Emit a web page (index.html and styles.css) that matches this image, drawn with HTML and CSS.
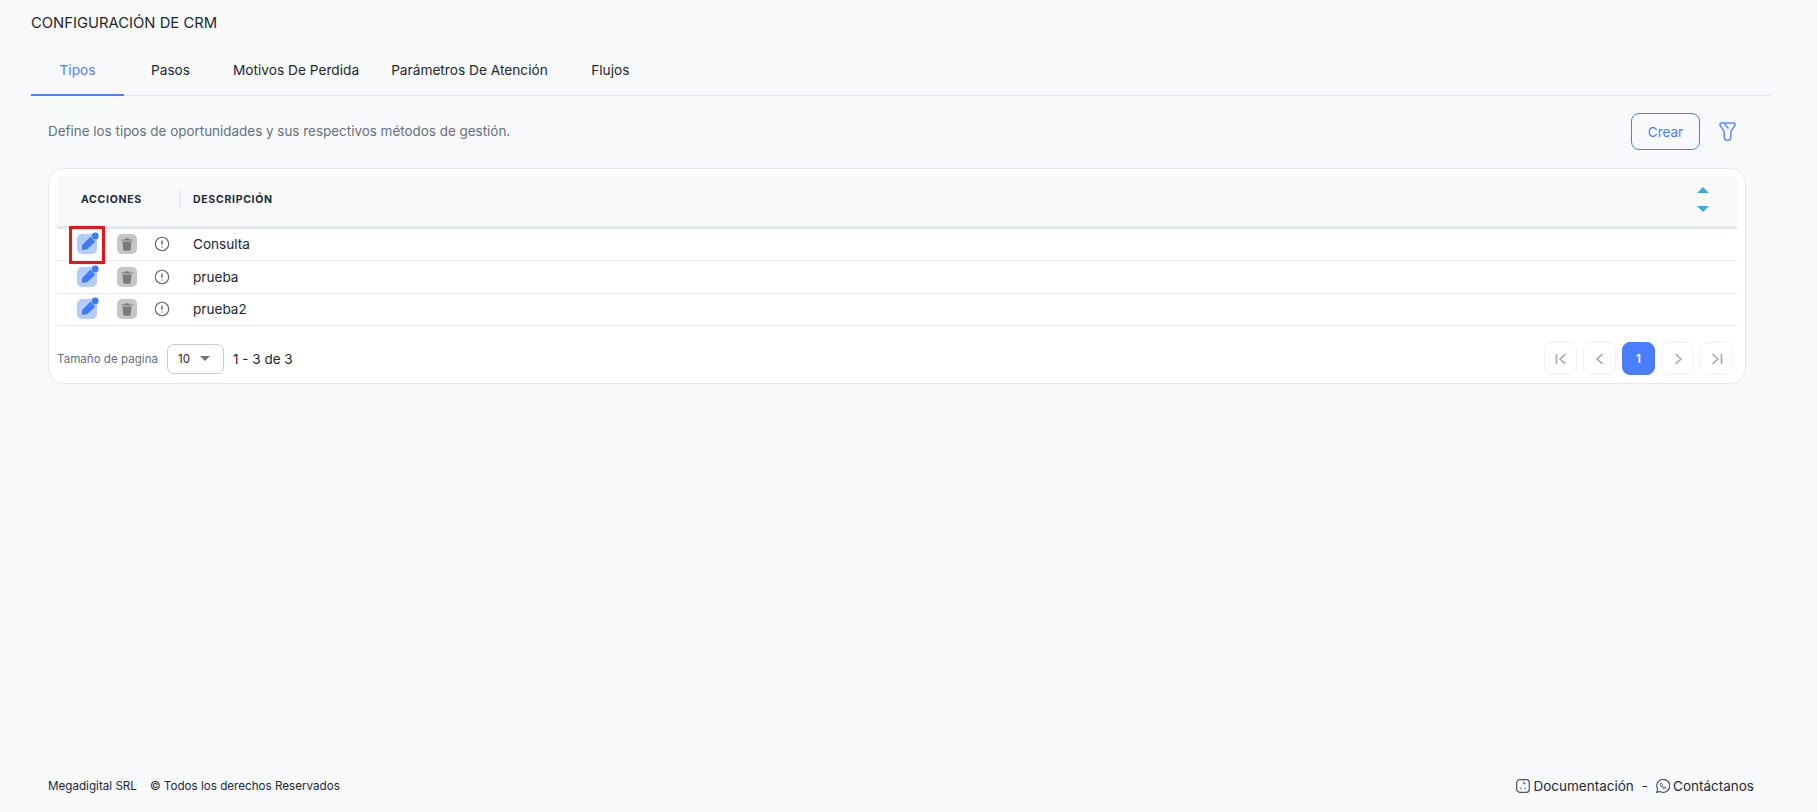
FILE: index.html
```html
<!DOCTYPE html>
<html lang="es">
<head>
    <meta charset="UTF-8">
    <title>Configuración de CRM</title>
    <link rel="stylesheet" href="styles.css">
</head>
<body>

<div class="page">
    <main class="content">
        <h1 class="title">CONFIGURACIÓN DE CRM</h1>

        <nav class="tabs">
            <a class="tab active">Tipos</a>
            <a class="tab">Pasos</a>
            <a class="tab">Motivos De Perdida</a>
            <a class="tab">Parámetros De Atención</a>
            <a class="tab">Flujos</a>
        </nav>

        <div class="panel">
            <div class="toolbar">
                <p class="intro">Define los tipos de oportunidades y sus respectivos métodos de gestión.</p>
                <button class="btn-create">Crear</button>
                <svg class="filter-icon" width="17" height="19" viewBox="0 0 17 19" fill="none" stroke="#5b8cff" stroke-width="1.500" stroke-linejoin="round">
                    <path d="M2.500 1h12c1.500 0 2 1.500 1.200 2.600L12.500 8.500c-.5.6-.7 1.200-.7 2V16c0 1.500-1.300 2.200-3.300 2.200S5.300 17.500 5.300 16v-5.500c0-.8-.2-1.400-.7-2L1.300 3.600C.5 2.500 1 1 2.500 1z"/>
                    <path d="M5 1.200l4.500 5.300"/>
                </svg>
            </div>

            <!-- Tabla de tipos -->
            <div class="card">
                <div class="table-head">
                    <div class="col-actions head-actions">ACCIONES</div>
                    <div class="col-desc head-desc">DESCRIPCIÓN</div>
                    <div class="sort">
                        <span class="sort-up"></span>
                        <span class="sort-down"></span>
                    </div>
                </div>

                <div class="row">
                    <div class="col-actions">
                        <span class="icon-edit wrap-marked">
                            <svg width="20" height="20" viewBox="0 0 20 20"><path fill="#3f7bf6" d="M1.800 18.700l.3-3.800c.1-.6.3-1 .7-1.400L10.300 5.800l5 5-7.700 7c-.4.4-.8.600-1.300.7z"/><circle cx="15.200" cy="4.900" r="3.400" fill="#3f7bf6"/></svg>
                        </span>
                        <span class="icon-delete">
                            <svg width="14" height="14" viewBox="0 0 14 14" fill="#7a7a7a"><path d="M2.500 4.500h9l-.8 8c-.1.700-.6 1.200-1.300 1.200H4.600c-.7 0-1.200-.5-1.300-1.200z"/><path d="M1.300 2.500h3.500l.5-1.200h3.400l.5 1.200h3.500v1.100H1.300z"/></svg>
                        </span>
                        <span class="icon-info">
                            <svg width="16" height="16" viewBox="0 0 16 16" fill="none" stroke="#5c6470" stroke-width="1.100"><circle cx="8" cy="8" r="6.700"/><path d="M8 4.500v4.300M8 10.400v1.100" stroke-width="1.400"/></svg>
                        </span>
                    </div>
                    <div class="col-desc">Consulta</div>
                </div>
                <div class="row">
                    <div class="col-actions">
                        <span class="icon-edit">
                            <svg width="20" height="20" viewBox="0 0 20 20"><path fill="#3f7bf6" d="M1.800 18.700l.3-3.800c.1-.6.3-1 .7-1.400L10.300 5.800l5 5-7.700 7c-.4.4-.8.600-1.300.7z"/><circle cx="15.200" cy="4.900" r="3.400" fill="#3f7bf6"/></svg>
                        </span>
                        <span class="icon-delete">
                            <svg width="14" height="14" viewBox="0 0 14 14" fill="#7a7a7a"><path d="M2.500 4.500h9l-.8 8c-.1.700-.6 1.200-1.300 1.200H4.600c-.7 0-1.200-.5-1.300-1.200z"/><path d="M1.300 2.500h3.500l.5-1.200h3.400l.5 1.200h3.500v1.100H1.300z"/></svg>
                        </span>
                        <span class="icon-info">
                            <svg width="16" height="16" viewBox="0 0 16 16" fill="none" stroke="#5c6470" stroke-width="1.100"><circle cx="8" cy="8" r="6.700"/><path d="M8 4.500v4.300M8 10.400v1.100" stroke-width="1.400"/></svg>
                        </span>
                    </div>
                    <div class="col-desc">prueba</div>
                </div>
                <div class="row">
                    <div class="col-actions">
                        <span class="icon-edit">
                            <svg width="20" height="20" viewBox="0 0 20 20"><path fill="#3f7bf6" d="M1.800 18.700l.3-3.800c.1-.6.3-1 .7-1.400L10.300 5.800l5 5-7.700 7c-.4.4-.8.600-1.300.7z"/><circle cx="15.200" cy="4.900" r="3.400" fill="#3f7bf6"/></svg>
                        </span>
                        <span class="icon-delete">
                            <svg width="14" height="14" viewBox="0 0 14 14" fill="#7a7a7a"><path d="M2.500 4.500h9l-.8 8c-.1.700-.6 1.200-1.300 1.200H4.600c-.7 0-1.200-.5-1.300-1.200z"/><path d="M1.300 2.500h3.500l.5-1.200h3.400l.5 1.200h3.500v1.100H1.300z"/></svg>
                        </span>
                        <span class="icon-info">
                            <svg width="16" height="16" viewBox="0 0 16 16" fill="none" stroke="#5c6470" stroke-width="1.100"><circle cx="8" cy="8" r="6.700"/><path d="M8 4.500v4.300M8 10.400v1.100" stroke-width="1.400"/></svg>
                        </span>
                    </div>
                    <div class="col-desc">prueba2</div>
                </div>

                <div class="pager">
                    <span class="pager-label">Tamaño de pagina</span>
                    <span class="page-size">10 <i class="caret"></i></span>
                    <span class="pager-range">1 - 3 de 3</span>
                    <div class="pager-buttons">
                        <span class="page-btn"><svg width="14" height="14" viewBox="0 0 14 14" fill="none" stroke="#a3a8b0" stroke-width="1.600"><path d="M2.500 2v10M11.500 2L6 7l5.500 5"/></svg></span>
                        <span class="page-btn"><svg width="14" height="14" viewBox="0 0 14 14" fill="none" stroke="#a3a8b0" stroke-width="1.600"><path d="M9.500 2L4 7l5.500 5"/></svg></span>
                        <span class="page-btn current">1</span>
                        <span class="page-btn"><svg width="14" height="14" viewBox="0 0 14 14" fill="none" stroke="#a3a8b0" stroke-width="1.600"><path d="M4.500 2L10 7l-5.500 5"/></svg></span>
                        <span class="page-btn"><svg width="14" height="14" viewBox="0 0 14 14" fill="none" stroke="#a3a8b0" stroke-width="1.600"><path d="M2.500 2L8 7l-5.500 5M11.500 2v10"/></svg></span>
                    </div>
                </div>
            </div>
        </div>
    </main>

    <footer class="footer">
        <div class="footer-left">
            <span>Megadigital SRL</span>
            <span>© Todos los derechos Reservados</span>
        </div>
        <div class="footer-right">
            <svg width="14" height="14" viewBox="1 1 14 14" fill="none" stroke="#4b5563" stroke-width="1.200"><rect x="1.700" y="1.700" width="12.600" height="12.600" rx="3"/><path d="M6.300 9.500l-1 .9 1 .9M9.700 9.500l1 .9-1 .9M8.800 3.500v2.200h2" stroke-width="1"/></svg>
            <span>Documentación</span>
            <span class="dash">-</span>
            <svg width="14" height="14" viewBox="1 1 14 14" fill="none" stroke="#4b5563" stroke-width="1.200"><path d="M1.700 14.300l1-3.200A6.500 6.500 0 1 1 5 13.400z"/><path d="M6 5c-.8.300-1 1.100-.6 2 .6 1.500 1.900 2.800 3.500 3.500.9.300 1.700 0 2-.8l-1.500-1-.7.600c-.8-.4-1.500-1-1.900-1.900l.6-.7z" stroke-width=".9"/></svg>
            <span>Contáctanos</span>
        </div>
    </footer>
</div>

</body>
</html>
```

FILE: styles.css
```css
* {
    box-sizing: border-box;
}
html, body {
    height: 100%;
}
body {
    margin: 0;
    background-color: #f8f9fb;
    font-family: Inter, "Liberation Sans", sans-serif;
    color: #1f2430;
    overflow: hidden;
}
.page {
    height: 100%;
    display: flex;
    flex-direction: column;
}
.content {
    flex: 1;
    padding: 15px 46px 0 31px;
}
.title {
    margin: 0;
    font-size: 14.800px;
    font-weight: 400;
    line-height: 16px;
    color: #23272f;
}
.tabs {
    display: flex;
    margin-top: 16px;
    height: 49px;
    border-bottom: 1px solid #e3e6ec;
}
.tab {
    min-width: 93px;
    padding: 0 16px 3px;
    height: 49px;
    display: flex;
    align-items: center;
    justify-content: center;
    font-size: 13.700px;
    color: #23272f;
}
.tab.active {
    color: #4f7dff;
    border-bottom: 2px solid #4a7dff;
    padding-bottom: 1px;
}
.panel {
    padding: 0 25px 0 17px;
}
.toolbar {
    display: flex;
    align-items: center;
    height: 72px;
    padding: 0 10px 1px 0;
}
.intro {
    flex: 1;
    margin: 0 0 2px;
    font-size: 13.450px;
    color: #667080;
}
.btn-create {
    width: 69px;
    height: 37px;
    border: 1px solid #4a7dff;
    border-radius: 8px;
    background: transparent;
    color: #4f7dff;
    font-family: inherit;
    font-size: 13.500px;
    margin-right: 19px;
}
.card {
    background-color: #fff;
    border: 1px solid #e7e9ee;
    border-radius: 16px;
    padding: 7px 8px 8px;
    height: 216px;
}
.table-head {
    display: flex;
    align-items: center;
    height: 53px;
    padding-bottom: 3px;
    background-color: #f8f9fb;
    border-bottom: 3px solid #e4e6ea;
}
.col-actions {
    width: 124px;
    display: flex;
    align-items: center;
    flex-shrink: 0;
}
.col-desc {
    flex: 1;
    font-size: 13.600px;
}
.head-actions, .head-desc {
    font-size: 10.500px;
    font-weight: 700;
    letter-spacing: .7px;
    color: #1f2937;
}
.head-actions {
    padding-left: 24px;
    height: 19px;
    border-right: 2px solid #e7e9ee;
}
.head-desc {
    padding-left: 12px;
}
.sort {
    display: flex;
    flex-direction: column;
    gap: 13px;
    margin-right: 28px;
    align-items: center;
}
.sort-up, .sort-down {
    width: 0;
    height: 0;
    border-left: 6px solid transparent;
    border-right: 6px solid transparent;
}
.sort-up {
    border-bottom: 6px solid #3fa7dc;
}
.sort-down {
    border-top: 6px solid #3fa7dc;
}
.row {
    display: flex;
    align-items: center;
    height: 32.400px;
    border-bottom: 1px solid #e9ebef;
}
.row .col-desc {
    padding: 0 0 1px 12px;
    color: #1f2430;
}
.row .col-actions {
    padding-bottom: 1px;
}
.icon-edit, .icon-delete {
    width: 20px;
    height: 20px;
    border-radius: 5px;
    display: flex;
    align-items: center;
    justify-content: center;
    position: relative;
}
.icon-edit {
    margin-left: 20px;
    background-color: #b3cdfb;
}
.icon-edit svg {
    position: absolute;
    top: -3px;
    left: 3px;
}
.wrap-marked::after {
    content: "";
    box-sizing: border-box;
    position: absolute;
    top: -8px;
    left: -8px;
    width: 36px;
    height: 38px;
    border: 3px solid #e8131b;
    pointer-events: none;
}
.icon-delete {
    margin-left: 20px;
    background-color: #c6c6c6;
}
.icon-info {
    margin-left: 17px;
    display: flex;
}
.pager {
    display: flex;
    align-items: center;
    margin-top: 16px;
    font-size: 11.600px;
}
.pager-label {
    color: #667080;
}
.page-size {
    width: 57px;
    height: 30px;
    margin-left: 9px;
    border: 1px solid #c6ccd6;
    border-radius: 7px;
    display: flex;
    align-items: center;
    gap: 10px;
    padding-left: 10px;
    color: #23272f;
}
.caret {
    width: 0;
    height: 0;
    border-left: 5.500px solid transparent;
    border-right: 5.500px solid transparent;
    border-top: 5px solid #6b7280;
}
.pager-range {
    margin-left: 9px;
    font-size: 13.500px;
}
.pager-buttons {
    margin-left: auto;
    display: flex;
    gap: 6px;
    padding-right: 4px;
}
.page-btn {
    width: 33px;
    height: 33px;
    border: 1px solid #f1f2f5;
    border-radius: 8px;
    display: flex;
    align-items: center;
    justify-content: center;
}
.page-btn.current {
    background-color: #4a7dff;
    border-color: #4a7dff;
    color: #fff;
    font-weight: 600;
}
.footer {
    height: 60px;
    padding: 25px 63px 0 48px;
    display: flex;
    justify-content: space-between;
    align-items: flex-start;
}
.footer-left {
    display: flex;
    gap: 13px;
    font-size: 11.650px;
    line-height: 18px;
    color: #1f2937;
}
.footer-right {
    display: flex;
    align-items: center;
    gap: 3px;
    font-size: 13.500px;
    line-height: 18px;
    color: #1f2937;
}
.dash {
    margin: 0 5px;
}
```
